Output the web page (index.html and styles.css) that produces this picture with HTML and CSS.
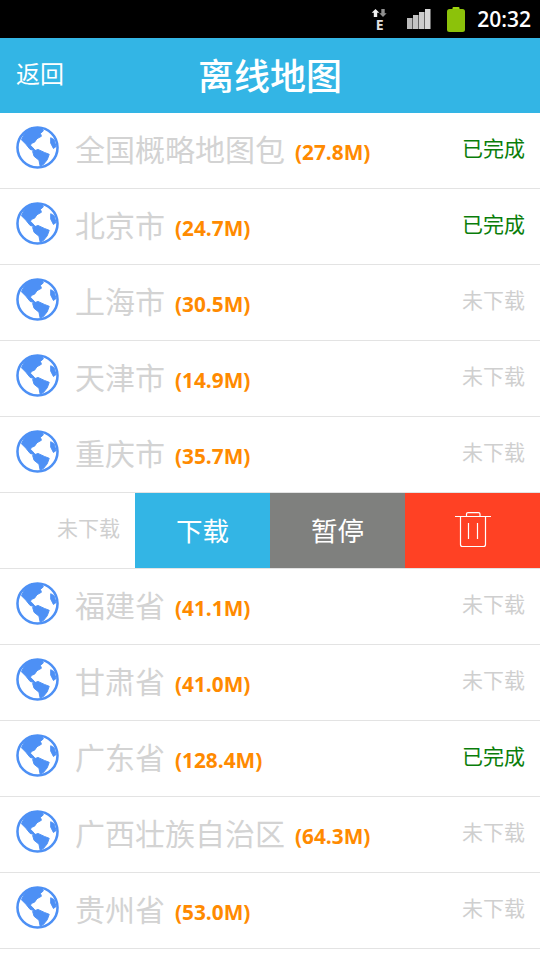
FILE: index.html
```html
<!DOCTYPE html>
<html lang="zh">
<head>
<meta charset="utf-8">
<title>离线地图</title>
<link rel="stylesheet" href="styles.css">
</head>
<body>
<svg class="defs" width="0" height="0">
  <symbol id="globe" viewBox="0 0 44 44">
    <circle cx="22" cy="22" r="20.5" fill="#fff" stroke="#4d90f5" stroke-width="2.6"/>
    <g fill="#4d90f5" stroke="#4d90f5" stroke-width="1" stroke-linejoin="round">
      <path d="M9 7.500 L16 1.500 L26 1.500 L28 5 L25 7.500 L26 10.500 L21.500 13 L19 16.500 L15.500 18 L15 20 L17.500 22.500 L20 25.500 L14.500 24 L10 18.500 L5.500 14 Z"/>
      <path d="M17 26 L22.500 24 L29 27 L34 29 L32 34.500 L28 39.500 L24.700 41 L23.500 35 L18.500 31 Z"/>
      <path d="M35.500 12 L39 14 L41 21 L38.300 23 L35.500 17.500 Z"/>
    </g>
  </symbol>
</svg>

<header class="status-bar">
  <span class="net">
    <svg class="net-arrows" width="15" height="8" viewBox="0 0 15 8"><path fill="#efefef" d="M3.500 0 L7.300 3.800 H5.200 V8 H1.800 V3.800 H-0.300 Z"/><path fill="#909090" d="M11 8 L7.300 4.200 H9.300 V0 H12.700 V4.200 H14.700 Z"/></svg>
    <b class="net-e">E</b>
  </span>
  <svg class="signal" width="24" height="20" viewBox="0 0 24 20"><rect x="0" y="9" width="5.500" height="11" fill="#bbb"/><rect x="6" y="6" width="5.500" height="14" fill="#c4c4c4"/><rect x="12" y="3" width="5.500" height="17" fill="#ccc"/><rect x="18" y="0" width="5.500" height="20" fill="#d6d6d6"/></svg>
  <svg class="battery" width="18" height="25" viewBox="0 0 18 25"><rect x="5.500" y="0" width="7" height="3" rx="1" fill="#9fd40c"/><rect x="0" y="2" width="18" height="23" rx="2.500" fill="#8cc20a"/></svg>
  <span class="time">20:32</span>
</header>

<nav class="app-bar">
  <a class="back">返回</a>
  <h1 class="title">离线地图</h1>
</nav>

<ul class="list">
  <li class="row"><svg class="globe"><use href="#globe"/></svg><span class="name">全国概略地图包</span><span class="size">(27.8M)</span><span class="state done">已完成</span></li>
  <li class="row"><svg class="globe"><use href="#globe"/></svg><span class="name">北京市</span><span class="size">(24.7M)</span><span class="state done">已完成</span></li>
  <li class="row"><svg class="globe"><use href="#globe"/></svg><span class="name">上海市</span><span class="size">(30.5M)</span><span class="state">未下载</span></li>
  <li class="row"><svg class="globe"><use href="#globe"/></svg><span class="name">天津市</span><span class="size">(14.9M)</span><span class="state">未下载</span></li>
  <li class="row"><svg class="globe"><use href="#globe"/></svg><span class="name">重庆市</span><span class="size">(35.7M)</span><span class="state">未下载</span></li>
  <li class="row swiped">
    <span class="state">未下载</span>
    <button class="action download">下载</button>
    <button class="action pause">暂停</button>
    <button class="action remove" aria-label="删除">
      <svg class="trash" width="36" height="36" viewBox="0 0 36 36" fill="none" stroke="#fff" stroke-width="1.2"><path d="M0 4.500 H36"/><path d="M11.500 4 V2 Q11.500 0.600 13 0.600 H23.500 Q25 0.600 25 2 V4"/><path d="M5.500 4.500 V32.500 Q5.500 34.500 7.500 34.500 H28.500 Q30.500 34.500 30.500 32.500 V4.500"/><path d="M13.500 11 V27 M22.500 11 V27"/></svg>
    </button>
  </li>
  <li class="row"><svg class="globe"><use href="#globe"/></svg><span class="name">福建省</span><span class="size">(41.1M)</span><span class="state">未下载</span></li>
  <li class="row"><svg class="globe"><use href="#globe"/></svg><span class="name">甘肃省</span><span class="size">(41.0M)</span><span class="state">未下载</span></li>
  <li class="row"><svg class="globe"><use href="#globe"/></svg><span class="name">广东省</span><span class="size">(128.4M)</span><span class="state done">已完成</span></li>
  <li class="row"><svg class="globe"><use href="#globe"/></svg><span class="name">广西壮族自治区</span><span class="size">(64.3M)</span><span class="state">未下载</span></li>
  <li class="row"><svg class="globe"><use href="#globe"/></svg><span class="name">贵州省</span><span class="size">(53.0M)</span><span class="state">未下载</span></li>
</ul>
</body>
</html>
```
FILE: styles.css
```css
* { box-sizing: border-box; }
html, body { margin: 0; padding: 0; }
body {
  width: 540px;
  height: 960px;
  overflow: hidden;
  background: #fff;
  font-family: "Noto Sans CJK SC", "Open Sans", sans-serif;
}
.defs { position: absolute; }

.status-bar {
  height: 38px;
  background: #000;
  display: flex;
  align-items: center;
  justify-content: flex-end;
  padding-right: 9px;
}
.net { display: flex; flex-direction: column; align-items: center; width: 15px; margin-right: 20px; line-height: 1; gap: 3px; }
.net-arrows { display: block; overflow: visible; }
.net-e { color: #e0e0e0; font: bold 14px/10px "Open Sans", sans-serif; }
.signal { margin-right: 16px; }
.battery { margin-right: 12px; }
.time { color: #fff; font: 600 21px/1 "Open Sans", sans-serif; }

.app-bar {
  height: 75px;
  background: #33b5e5;
  color: #fff;
  display: grid;
  grid-template-columns: 1fr auto 1fr;
  align-items: center;
  padding: 0 16px;
}
.back { font-size: 24px; line-height: 1; margin-top: -6px; }
.title { grid-column: 2; margin: -4px 0 0; font-size: 36px; font-weight: 500; line-height: 1; }

.list { list-style: none; margin: 0; padding: 0; }
.row {
  height: 76px;
  border-bottom: 1px solid #e3e3e3;
  display: flex;
  align-items: center;
  padding: 0 15px 0 16px;
}
.globe { width: 43px; height: 43px; flex: none; margin-top: -6px; }
.name { margin: -6px 0 0 16px; font-size: 30px; line-height: 1; color: #d3d3d3; }
.size { margin: 4px 0 0 10px; font: bold 20.800px/1 "Open Sans", sans-serif; color: #ff8a00; }
.state { margin-left: auto; font-size: 21px; line-height: 1; color: #cfcfcf; margin-top: -6px; }
.state.done { color: #0a7d0a; }

.swiped { padding: 0; }
.swiped .state { margin-right: 15px; }
.action {
  width: 135px;
  height: 75px;
  border: 0;
  padding: 0 0 1px;
  color: #fff;
  font: 26.500px/1 "Noto Sans CJK SC", sans-serif;
  display: flex;
  align-items: center;
  justify-content: center;
}
.download { background: #33b5e5; }
.pause { background: #7f807e; }
.remove { background: #ff4124; }
.trash { display: block; }
```
